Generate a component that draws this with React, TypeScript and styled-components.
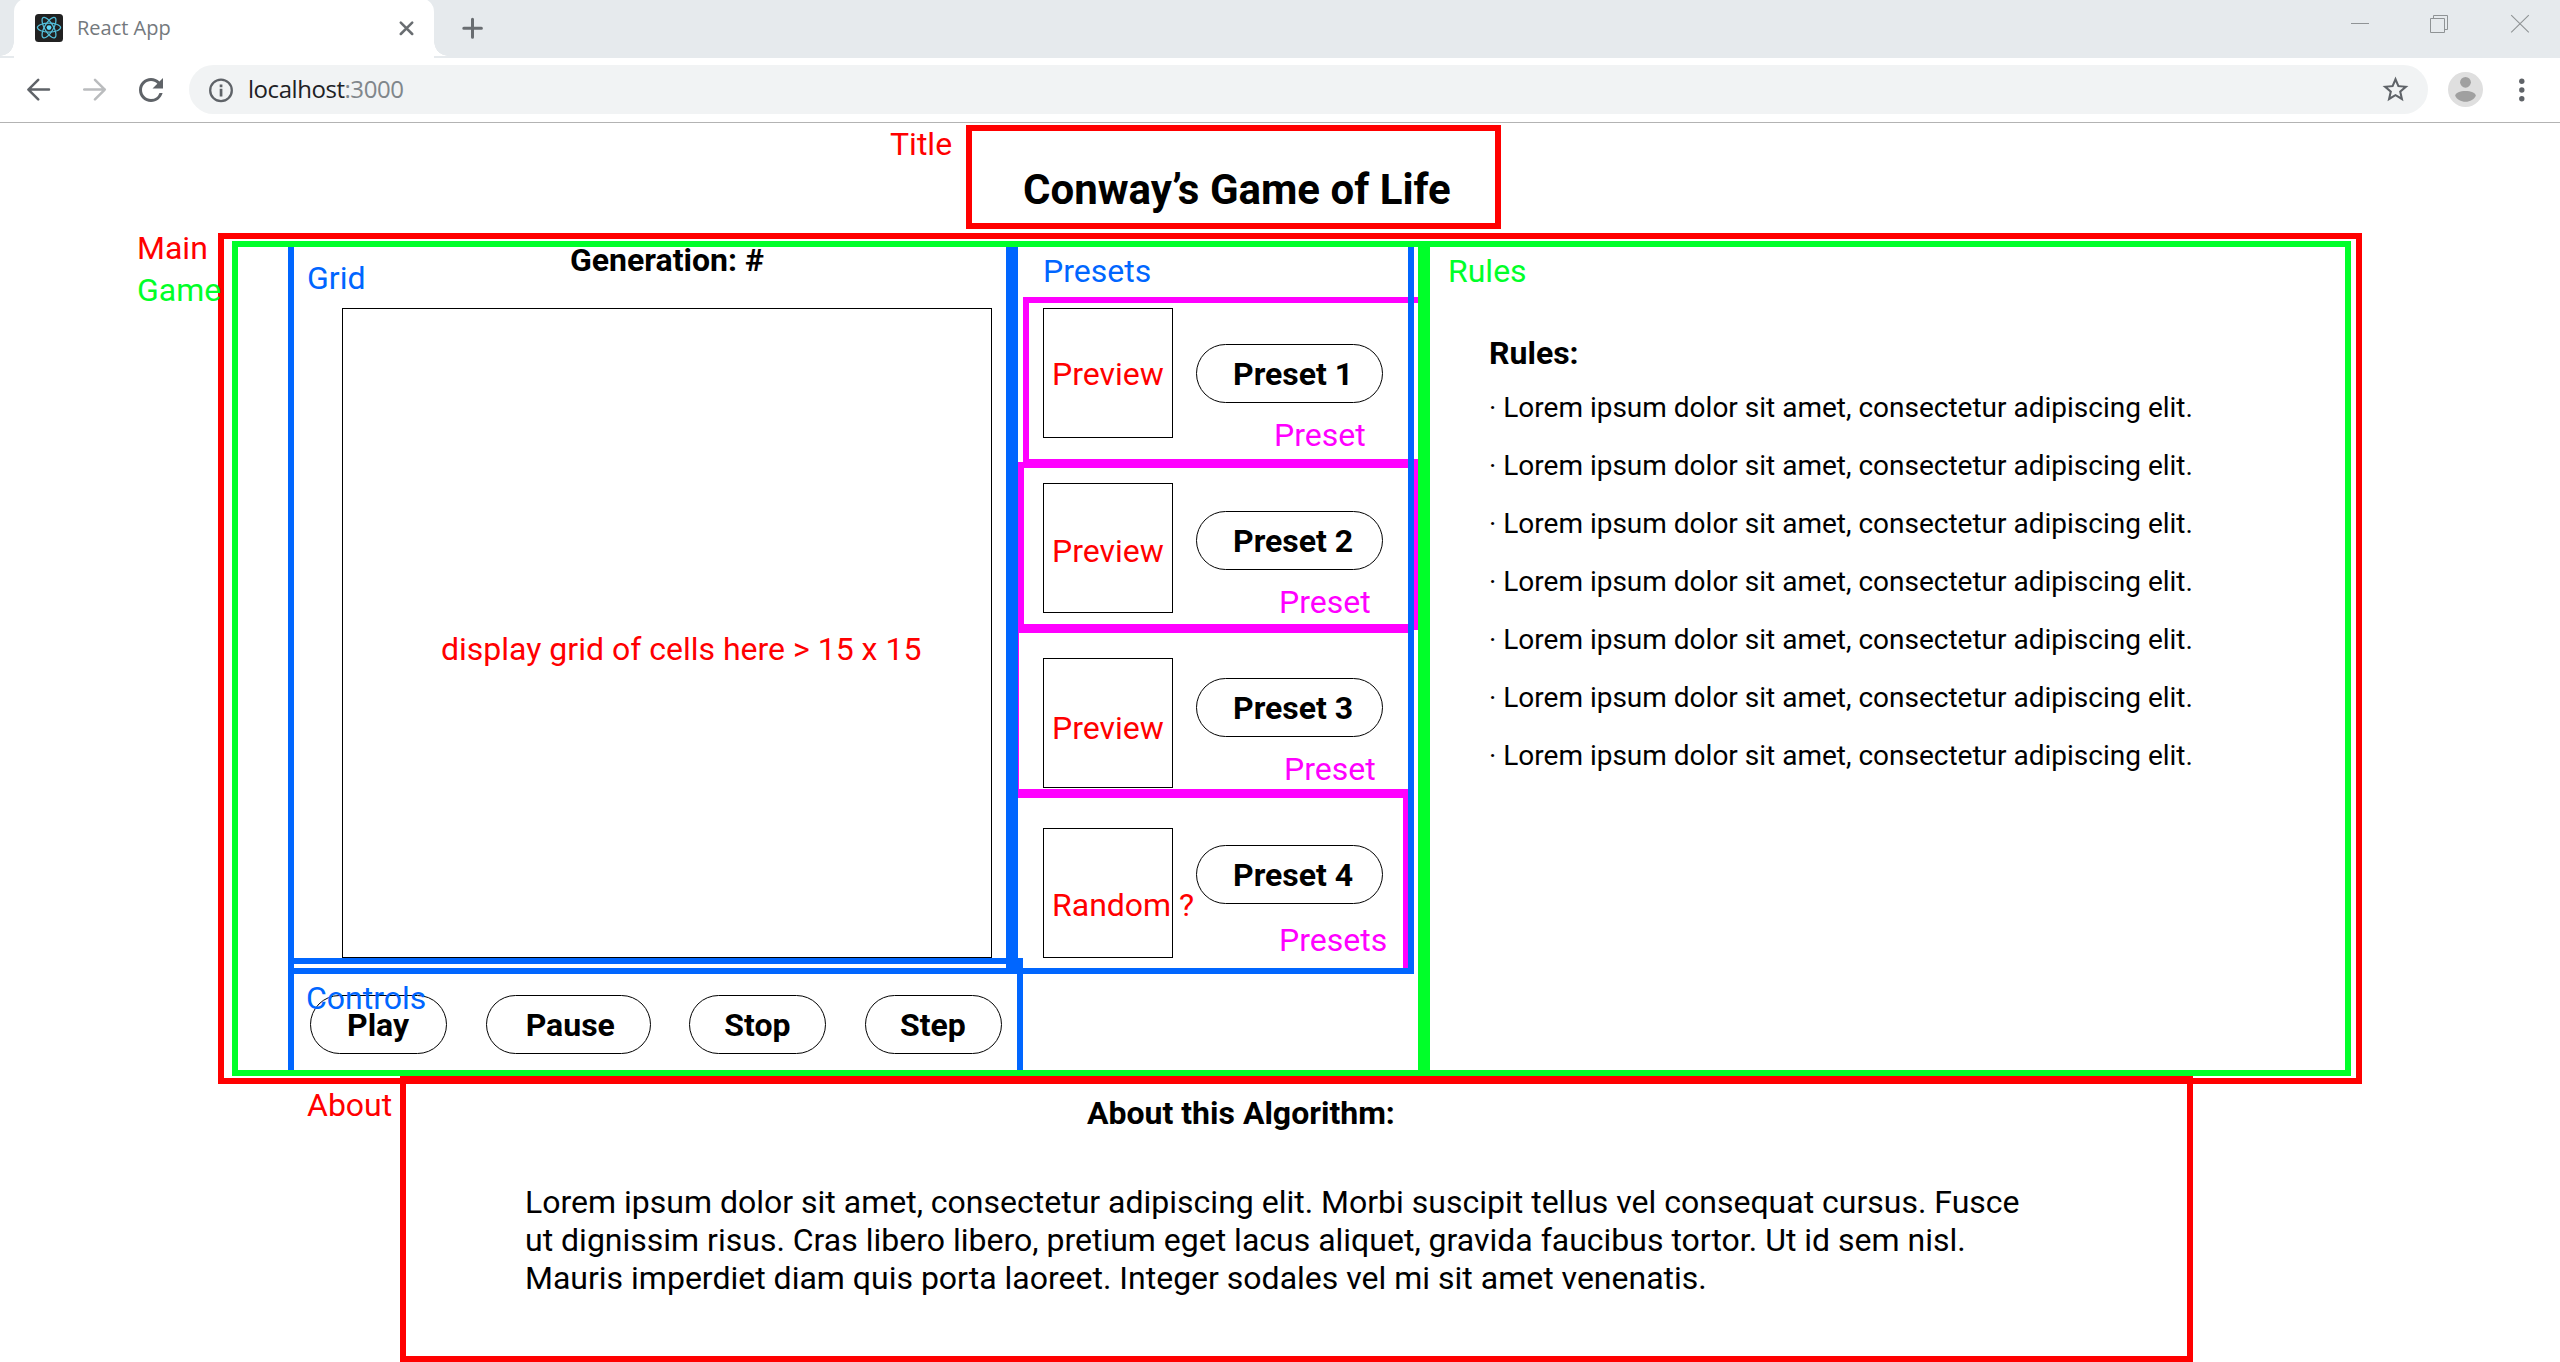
import React from 'react';
import styled, { createGlobalStyle } from 'styled-components';

const RED = '#ff0000';
const GREEN = '#00ff29';
const BLUE = '#0066ff';
const MAGENTA = '#ff00ff';

const GlobalStyle = createGlobalStyle`
  *, *::before, *::after { box-sizing: border-box; }
  body { margin: 0; background: #fff; overflow: hidden; }
  h1, h2, p, ul { margin: 0; padding: 0; }
  svg { display: block; flex: none; }
`;

const Page = styled.div`
  width: 2560px;
  height: 1362px;
  display: flex;
  flex-direction: column;
  overflow: hidden;
  color: #000;
  font: 400 32px/38px Roboto, 'Liberation Sans', sans-serif;
`;

/* ---------- browser chrome ---------- */

const TabStrip = styled.div`
  flex: none;
  height: 58px;
  display: flex;
  align-items: flex-start;
  padding-left: 14px;
  background: #e6eaed;
`;

const Tab = styled.div`
  position: relative;
  width: 420px;
  height: 60px;
  margin-top: -2px;
  padding: 16px 20px 0 21px;
  display: flex;
  align-items: flex-start;
  gap: 14px;
  background: #fff;
  border-radius: 14px 14px 0 0;

  &::before,
  &::after {
    content: '';
    position: absolute;
    bottom: 2px;
    width: 14px;
    height: 14px;
  }
  &::before {
    left: -14px;
    background: radial-gradient(circle at 0 0, transparent 13.5px, #fff 14px);
  }
  &::after {
    right: -14px;
    background: radial-gradient(circle at 100% 0, transparent 13.5px, #fff 14px);
  }
`;

const TabTitle = styled.span`
  flex: 1;
  color: #74797d;
  font: 400 20px/27px 'Open Sans', 'Noto Sans', sans-serif;
`;

const TabClose = styled.div`
  padding-top: 7px;
`;

const NewTab = styled.div`
  padding: 17px 0 0 28px;
`;

const WindowButtons = styled.div`
  margin-left: auto;
  padding: 14px 30px 0 0;
  display: flex;
  gap: 60px;
`;

const Toolbar = styled.div`
  flex: none;
  height: 65px;
  padding: 7px 32px 8px 27px;
  display: flex;
  align-items: center;
  background: #fff;
  border-bottom: 1px solid #b3b3b3;
`;

const NavButtons = styled.div`
  display: flex;
  align-items: center;
  gap: 32px;
  margin-right: 26px;
`;

const AddressBar = styled.div`
  flex: 1;
  height: 49px;
  margin: 0 20px;
  padding: 0 17px 0 19px;
  display: flex;
  align-items: center;
  gap: 14px;
  background: #f1f3f4;
  border-radius: 25px;
`;

const Url = styled.span`
  flex: 1;
  padding-bottom: 2px;
  color: #202124;
  font: 400 24px/33px 'Open Sans', 'Noto Sans', sans-serif;
  letter-spacing: -0.45px;
`;

const Port = styled.span`
  color: #80868b;
`;

const MenuDots = styled.div`
  margin-left: 33px;
`;

/* ---------- shared wireframe parts ---------- */

const Tag = styled.span<{ $color: string }>`
  color: ${(p) => p.$color};
  white-space: nowrap;
`;

/* A component name that floats over or beside the outline it names. */
const FloatingTag = styled(Tag)<{ $left: number; $top: number }>`
  position: absolute;
  left: ${(p) => p.$left}px;
  top: ${(p) => p.$top}px;
`;

const Pill = styled.button<{ $width: number; $indent: number }>`
  flex: none;
  width: ${(p) => p.$width}px;
  height: 59px;
  padding: 10px 0 0 ${(p) => p.$indent - 1}px;
  display: flex;
  align-items: flex-start;
  background: transparent;
  border: 1px solid #000;
  border-radius: 30px;
  color: #000;
  font: 700 32px/38px Roboto, 'Liberation Sans', sans-serif;
  white-space: nowrap;
`;

const Heading = styled.h2<{ $indent: number }>`
  margin-left: ${(p) => p.$indent}px;
  font-size: 32px;
  line-height: 38px;
  font-weight: 700;
`;

/* ---------- page sections ---------- */

const TitleBox = styled.header`
  position: relative;
  flex: none;
  width: 535px;
  height: 104px;
  margin: 2px 0 4px 966px;
  padding: 34px 0 0 51px;
  border: 6px solid ${RED};
`;

const PageTitle = styled.h1`
  font-size: 42px;
  line-height: 49px;
  font-weight: 700;
  white-space: nowrap;
`;

const MainBox = styled.main`
  position: relative;
  isolation: isolate;
  flex: none;
  width: 2144px;
  height: 851px;
  margin-left: 218px;
  padding: 2px 5px 2px 8px;
  display: flex;
  border: 6px solid ${RED};
`;

const GameBox = styled.section`
  width: 1192px;
  padding-left: 50px;
  border: 6px solid ${GREEN};
`;

const GameRow = styled.div`
  display: flex;
  height: 727px;
`;

const GridBox = styled.div`
  position: relative;
  flex: none;
  width: 724px;
  border: 6px solid ${BLUE};
  border-top: 0;
`;

const Generation = styled(Heading)`
  margin-top: -6px;
`;

const CellGrid = styled.div`
  width: 650px;
  height: 650px;
  margin: 29px 0 0 48px;
  padding: 321px 0 0 98px;
  border: 1px solid #000;
`;

const PresetsBox = styled.div`
  flex: none;
  width: 402px;
  border: 6px solid ${BLUE};
  border-top: 0;
`;

const PresetsName = styled.div`
  margin: 5px 0 7px 25px;
`;

/* Sits below the outlines of its ancestors, which cover its overflowing edges. */
const PresetBox = styled.div<{ $shift: number; $height: number }>`
  position: relative;
  z-index: -1;
  width: 401px;
  height: ${(p) => p.$height}px;
  margin-left: ${(p) => p.$shift}px;
  padding-left: ${(p) => 19 - p.$shift}px;
  display: flex;
  align-items: flex-start;
  gap: 23px;
  border: 6px solid ${MAGENTA};

  & + & {
    margin-top: -3px;
  }
`;

const Preview = styled.div<{ $top: number; $textTop: number }>`
  flex: none;
  width: 130px;
  height: 130px;
  margin-top: ${(p) => p.$top}px;
  padding: ${(p) => p.$textTop}px 0 0 8px;
  border: 1px solid #000;
`;

const PresetSide = styled.div<{ $top: number }>`
  flex: none;
  margin-top: ${(p) => p.$top}px;
`;

const PresetName = styled.div<{ $gap: number; $indent: number }>`
  margin: ${(p) => p.$gap}px 0 0 ${(p) => p.$indent}px;
`;

const ControlsBox = styled.div`
  position: relative;
  width: 735px;
  height: 112px;
  margin-top: -16px;
  padding: 31px 15px 0 16px;
  display: flex;
  justify-content: space-between;
  border: 6px solid ${BLUE};
  border-bottom: 0;
`;

const RulesBox = styled.section`
  width: 927px;
  padding-top: 5px;
  border: 6px solid ${GREEN};
`;

const RulesName = styled.div`
  margin: 0 0 44px 18px;
`;

const RuleList = styled.ul`
  margin: 19px 0 0 59px;
  display: flex;
  flex-direction: column;
  gap: 25px;
  list-style: none;
  font-size: 28px;
  line-height: 33px;
  white-space: nowrap;
`;

const AboutBox = styled.section`
  position: relative;
  flex: none;
  width: 1793px;
  height: 286px;
  margin: -8px 0 0 400px;
  padding-top: 12px;
  border: 6px solid ${RED};
`;

const AboutText = styled.p`
  width: 1510px;
  margin: 51px 0 0 119px;
`;

/* ---------- icons ---------- */

const ReactIcon = () => (
  <svg width="28" height="28" viewBox="0 0 28 28">
    <rect width="28" height="28" rx="3.5" fill="#212121" />
    <g fill="none" stroke="#54c0dc" strokeWidth="1.25">
      {[0, 60, 120].map((a) => (
        <ellipse key={a} cx="14" cy="13.6" rx="11.6" ry="4.4" transform={`rotate(${a} 14 13.6)`} />
      ))}
    </g>
    <circle cx="14" cy="13.6" r="2.4" fill="#61dafb" />
  </svg>
);

const CloseIcon = () => (
  <svg width="15" height="15" viewBox="0 0 15 15" stroke="#696d71" strokeWidth="2.5" strokeLinecap="round">
    <path d="M1.8 1.6 13.2 13M13.2 1.6 1.8 13" />
  </svg>
);

const PlusIcon = () => (
  <svg width="22" height="22" viewBox="0 0 22 22" stroke="#696d71" strokeWidth="3" strokeLinecap="round">
    <path d="M10.5 2.3v18M1.8 11.2h17.6" />
  </svg>
);

const MinimizeIcon = () => (
  <svg width="20" height="20" viewBox="0 0 20 20" fill="none" stroke="#8f9395">
    <path d="M1 9.5h18" />
  </svg>
);

const RestoreIcon = () => (
  <svg width="20" height="20" viewBox="0 0 20 20" fill="none" stroke="#8f9395">
    <path d="M.5 4.5h14v14H.5zM3.5 4.5v-3h14v14h-3" />
  </svg>
);

const WindowCloseIcon = () => (
  <svg width="20" height="20" viewBox="0 0 20 20" fill="none" stroke="#8f9395" strokeWidth="1.1">
    <path d="M1.2 1.2 18.8 18.4M18.8 1.2 1.2 18.4" />
  </svg>
);

const ArrowIcon = ({ color, forward }: { color: string; forward?: boolean }) => (
  <svg
    width="24"
    height="24"
    viewBox="0 0 24 24"
    fill="none"
    stroke={color}
    strokeWidth="2.5"
    strokeLinecap="round"
    strokeLinejoin="round"
  >
    {forward ? <path d="M1.2 11.6h20.6M12 1.8l9.8 9.8-9.8 9.8" /> : <path d="M22 11.6H1.6M11.2 1.8 1.4 11.6l9.8 9.8" />}
  </svg>
);

const ReloadIcon = () => (
  <svg width="36" height="36" viewBox="0 0 24 24" fill="#5f6368">
    <path d="M17.65 6.35A7.958 7.958 0 0 0 12 4c-4.42 0-7.99 3.58-7.99 8s3.57 8 7.99 8c3.73 0 6.84-2.55 7.73-6h-2.08A5.99 5.99 0 0 1 12 18c-3.31 0-6-2.69-6-6s2.69-6 6-6c1.66 0 3.14.69 4.22 1.78L13 11h7V4l-2.35 2.35z" />
  </svg>
);

const InfoIcon = () => (
  <svg width="26" height="26" viewBox="0 0 26 26">
    <circle cx="13" cy="13.4" r="10.8" fill="none" stroke="#5f6368" strokeWidth="2.3" />
    <path d="M11.7 7.6h2.7v2.7h-2.7zM11.7 11.8h2.7v7.6h-2.7z" fill="#5f6368" />
  </svg>
);

const StarIcon = () => (
  <svg width="31" height="31" viewBox="0 0 24 24" fill="#5f6368">
    <path d="M22 9.24l-7.19-.62L12 2 9.19 8.63 2 9.24l5.46 4.73L5.82 21 12 17.27 18.18 21l-1.63-7.03L22 9.24zM12 15.4l-3.76 2.27 1-4.28-3.32-2.88 4.38-.38L12 6.1l1.71 4.04 4.38.38-3.32 2.88 1 4.28L12 15.4z" />
  </svg>
);

const AvatarIcon = () => (
  <svg width="35" height="35" viewBox="0 0 35 35">
    <circle cx="17.5" cy="17.5" r="17.5" fill="#dfdfdf" />
    <circle cx="17.5" cy="10.3" r="5.4" fill="#a0a0a0" />
    <path d="M7.2 23.8c0-3 5-4.9 10.3-4.9s10.3 1.9 10.3 4.9c-1.5 3.5-5.6 6-10.3 6s-8.8-2.5-10.3-6z" fill="#a0a0a0" />
  </svg>
);

const DotsIcon = () => (
  <svg width="12" height="36" viewBox="0 0 12 36" fill="#5f6368">
    <circle cx="5.8" cy="9.3" r="2.7" />
    <circle cx="5.8" cy="18" r="2.7" />
    <circle cx="5.8" cy="26.8" r="2.7" />
  </svg>
);

/* ---------- data ---------- */

interface PresetSpec {
  title: string;
  preview: string;
  name: string;
  shift: number;
  height: number;
  previewTop: number;
  textTop: number;
  buttonTop: number;
  nameGap: number;
  nameIndent: number;
}

const presets: PresetSpec[] = [
  { title: 'Preset 1', preview: 'Preview', name: 'Preset', shift: 5, height: 168, previewTop: 5, textTop: 46, buttonTop: 41, nameGap: 13, nameIndent: 78 },
  { title: 'Preset 2', preview: 'Preview', name: 'Preset', shift: 0, height: 168, previewTop: 15, textTop: 48, buttonTop: 43, nameGap: 13, nameIndent: 83 },
  { title: 'Preset 3', preview: 'Preview', name: 'Preset', shift: -5, height: 168, previewTop: 25, textTop: 50, buttonTop: 45, nameGap: 13, nameIndent: 88 },
  { title: 'Preset 4', preview: 'Random ?', name: 'Presets', shift: -10, height: 182, previewTop: 30, textTop: 57, buttonTop: 47, nameGap: 17, nameIndent: 83 },
];

const controls = [
  { label: 'Play', width: 137, indent: 37 },
  { label: 'Pause', width: 165, indent: 40 },
  { label: 'Stop', width: 137, indent: 35 },
  { label: 'Step', width: 137, indent: 35 },
];

const rules = Array.from({ length: 7 }, () => 'Lorem ipsum dolor sit amet, consectetur adipiscing elit.');

/* ---------- components ---------- */

function Browser() {
  return (
    <>
      <TabStrip>
        <Tab>
          <ReactIcon />
          <TabTitle>React App</TabTitle>
          <TabClose>
            <CloseIcon />
          </TabClose>
        </Tab>
        <NewTab>
          <PlusIcon />
        </NewTab>
        <WindowButtons>
          <MinimizeIcon />
          <RestoreIcon />
          <WindowCloseIcon />
        </WindowButtons>
      </TabStrip>
      <Toolbar>
        <NavButtons>
          <ArrowIcon color="#5f6368" />
          <ArrowIcon color="#babcbe" forward />
        </NavButtons>
        <ReloadIcon />
        <AddressBar>
          <InfoIcon />
          <Url>
            localhost<Port>:3000</Port>
          </Url>
          <StarIcon />
        </AddressBar>
        <AvatarIcon />
        <MenuDots>
          <DotsIcon />
        </MenuDots>
      </Toolbar>
    </>
  );
}

function Preset({ spec }: { spec: PresetSpec }) {
  return (
    <PresetBox $shift={spec.shift} $height={spec.height}>
      <Preview $top={spec.previewTop} $textTop={spec.textTop}>
        <Tag $color={RED}>{spec.preview}</Tag>
      </Preview>
      <PresetSide $top={spec.buttonTop}>
        <Pill $width={187} $indent={37}>
          {spec.title}
        </Pill>
        <PresetName $gap={spec.nameGap} $indent={spec.nameIndent}>
          <Tag $color={MAGENTA}>{spec.name}</Tag>
        </PresetName>
      </PresetSide>
    </PresetBox>
  );
}

function Game() {
  return (
    <GameBox>
      <GameRow>
        <GridBox>
          <FloatingTag $color={BLUE} $left={13} $top={12}>
            Grid
          </FloatingTag>
          <Generation $indent={276}>Generation: #</Generation>
          <CellGrid>
            <Tag $color={RED}>display grid of cells here &gt; 15 x 15</Tag>
          </CellGrid>
        </GridBox>
        <PresetsBox>
          <PresetsName>
            <Tag $color={BLUE}>Presets</Tag>
          </PresetsName>
          {presets.map((spec) => (
            <Preset key={spec.title} spec={spec} />
          ))}
        </PresetsBox>
      </GameRow>
      <ControlsBox>
        {controls.map((c) => (
          <Pill key={c.label} $width={c.width} $indent={c.indent}>
            {c.label}
          </Pill>
        ))}
        <FloatingTag $color={BLUE} $left={12} $top={15}>
          Controls
        </FloatingTag>
      </ControlsBox>
    </GameBox>
  );
}

function Rules() {
  return (
    <RulesBox>
      <RulesName>
        <Tag $color={GREEN}>Rules</Tag>
      </RulesName>
      <Heading $indent={59}>Rules:</Heading>
      <RuleList>
        {rules.map((rule, i) => (
          <li key={i}>· {rule}</li>
        ))}
      </RuleList>
    </RulesBox>
  );
}

export default function App() {
  return (
    <Page>
      <GlobalStyle />
      <Browser />
      <TitleBox>
        <FloatingTag $color={RED} $left={-82} $top={-6}>
          Title
        </FloatingTag>
        <PageTitle>Conway’s Game of Life</PageTitle>
      </TitleBox>
      <MainBox>
        <FloatingTag $color={RED} $left={-87} $top={-10}>
          Main
        </FloatingTag>
        <FloatingTag $color={GREEN} $left={-87} $top={32}>
          Game
        </FloatingTag>
        <Game />
        <Rules />
      </MainBox>
      <AboutBox>
        <FloatingTag $color={RED} $left={-99} $top={4}>
          About
        </FloatingTag>
        <Heading $indent={681}>About this Algorithm:</Heading>
        <AboutText>
          Lorem ipsum dolor sit amet, consectetur adipiscing elit. Morbi suscipit tellus vel consequat cursus. Fusce ut
          dignissim risus. Cras libero libero, pretium eget lacus aliquet, gravida faucibus tortor. Ut id sem nisl.
          Mauris imperdiet diam quis porta laoreet. Integer sodales vel mi sit amet venenatis.
        </AboutText>
      </AboutBox>
    </Page>
  );
}
